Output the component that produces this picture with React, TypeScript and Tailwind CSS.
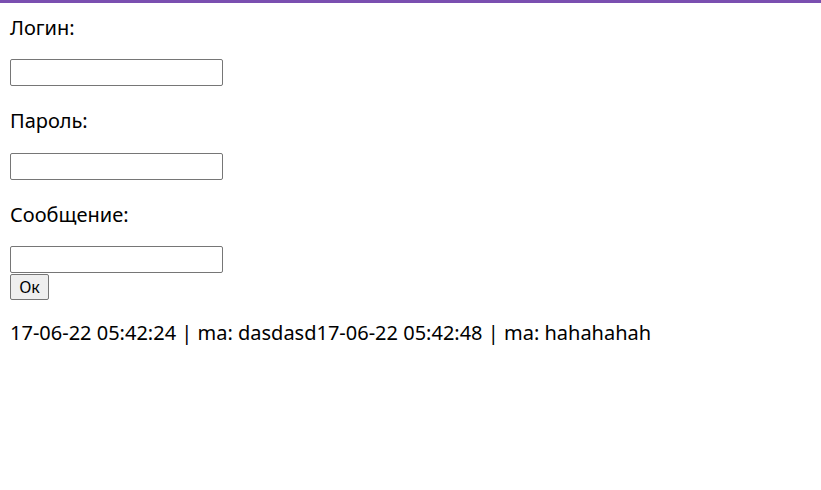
const labelCls = "block text-[20px] leading-[26px] text-black";
const inputCls = "block w-[213px] h-[27px] border border-[#767676] rounded-[2px] bg-white px-1 text-[14px]";

const App = () => {
    return (
        <div className="min-h-[490px] bg-white border-t-[3px] border-[#7a4fb0] px-[10px] font-['Noto_Sans','Open_Sans',sans-serif]">
            <label className={`${labelCls} mt-[12px]`}>Логин:</label>
            <input type="text" className={`${inputCls} mt-[18px]`} />
            <label className={`${labelCls} mt-[22px]`}>Пароль:</label>
            <input type="password" className={`${inputCls} mt-[19px]`} />
            <label className={`${labelCls} mt-[22px]`}>Сообщение:</label>
            <input type="text" className={`${inputCls} mt-[18px]`} />
            <button
                type="button"
                className="block mt-[1px] w-[39px] h-[26px] border border-[#767676] rounded-[2px] bg-[#efefef] text-[16px] leading-[20px] text-black"
            >
                Ок
            </button>
            <div className="mt-[20px] text-[20px] leading-[26px] text-black">
                17-06-22 05:42:24 | ma: dasdasd17-06-22 05:42:48 | ma: hahahahah
            </div>
        </div>
    );
};

export default App;
